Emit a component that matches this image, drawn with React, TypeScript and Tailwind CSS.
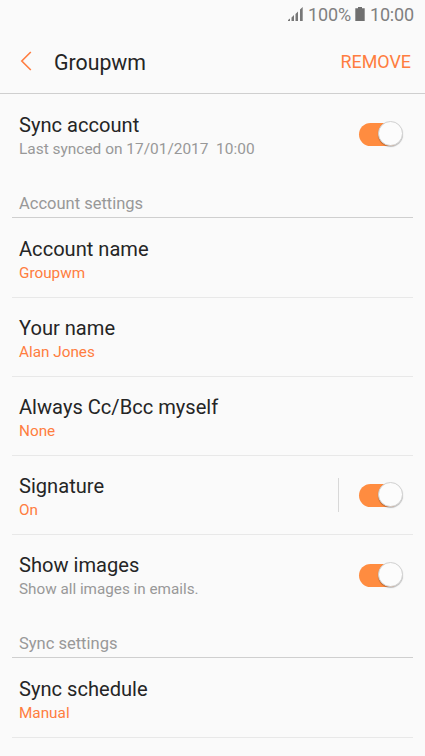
import React from "react";

function Toggle() {
  return (
    <span className="relative mr-[22px] block h-[26px] w-[44px] shrink-0">
      <span className="absolute top-[2px] left-0 h-[23px] w-[42px] rounded-full bg-[#ff8c40]" />
      <span className="absolute top-0 right-0 h-[25px] w-[25px] rounded-full border border-[#d2d2d2] bg-[#fcfcfc] shadow-[0_1px_1px_rgba(0,0,0,0.25)]" />
    </span>
  );
}

type RowProps = {
  title: string;
  sub: string;
  muted?: boolean;
  toggle?: boolean;
  divider?: boolean;
  line?: boolean;
  height: string;
  pad?: string;
  subSize?: string;
};

function Row({ title, sub, muted, toggle, divider, line, height, pad = "pt-[19px]", subSize = "text-[15.3px]" }: RowProps) {
  return (
    <div className={`mx-3 flex items-start ${height} ${line ? "border-b border-[#e8e8e8]" : ""}`}>
      <div className={`flex-1 pl-[7px] ${pad}`}>
        <div className="text-[20.1px] leading-6 text-[#252525]">{title}</div>
        <div className={`leading-[25px] whitespace-pre ${subSize} ${muted ? "text-[#989898]" : "text-[#ff7d40]"}`}>{sub}</div>
      </div>
      {toggle && (
        <div className={`-mr-3 flex h-full items-center ${line ? "" : "pb-px"}`}>
          {divider && <span className="mr-5 h-[34px] w-px bg-[#d8d8d8]" />}
          <Toggle />
        </div>
      )}
    </div>
  );
}

function Section({ children }: { children: string }) {
  return (
    <div className="mx-3 flex h-[43px] items-end border-b border-[#cfcfcf] pb-[2px] pl-[7px] text-[16.5px] leading-[23px] text-[#989898]">
      {children}
    </div>
  );
}

export default function App() {
  return (
    <main className="h-[756px] w-[425px] overflow-hidden bg-[#fafafa] font-['Roboto',sans-serif]">
      <div className="flex h-[28px] items-center justify-end pr-[11px] text-[18px] text-[#808080]">
        <svg width="15" height="14" viewBox="0 0 15 14" className="mr-[5px]" fill="#777777">
          <path d="M0 14V13L2 11.5V14zM3.5 14V10.5L6 8V14zM7.5 14V7L10 4.5V14zM12 14V2.5L14.7 0V14z" />
        </svg>
        <span className="tracking-[-0.15px]">100%</span>
        <svg width="10" height="14" viewBox="0 0 10 14" className="mr-[5px] ml-[4px]" fill="#707070">
          <path d="M3 0h4v1.2h2.7V14H.3V1.2H3z" />
        </svg>
        <span className="tracking-[-0.15px]">10:00</span>
      </div>
      <header className="flex h-[66px] items-center border-b border-[#cfcfcf] pt-px pr-[14px] pl-[20px]">
        <svg width="12" height="20" viewBox="0 0 12 20" fill="none" stroke="#ff7d40" strokeWidth="1.6">
          <path d="M10.8 1 1.8 10l9 9" />
        </svg>
        <h1 className="ml-[22px] flex-1 pt-[4px] text-[21.3px] text-[#252525]">Groupwm</h1>
        <span className="pt-[2px] text-[17.9px] text-[#ff7d40]">REMOVE</span>
      </header>
      <Row title="Sync account" sub="Last synced on 17/01/2017  10:00" muted toggle height="h-[81px]" subSize="text-[15.45px]" />
      <Section>Account settings</Section>
      <Row title="Account name" sub="Groupwm" line height="h-[80px]" />
      <Row title="Your name" sub="Alan Jones" line height="h-[79px]" pad="pt-[18px]" />
      <Row title="Always Cc/Bcc myself" sub="None" line height="h-[79px]" pad="pt-[18px]" />
      <Row title="Signature" sub="On" toggle divider line height="h-[79px]" pad="pt-[18px]" />
      <Row title="Show images" sub="Show all images in emails." muted toggle height="h-[80px]" pad="pt-[18px]" subSize="text-[15.25px]" />
      <Section>Sync settings</Section>
      <Row title="Sync schedule" sub="Manual" line height="h-[80px]" />
    </main>
  );
}
